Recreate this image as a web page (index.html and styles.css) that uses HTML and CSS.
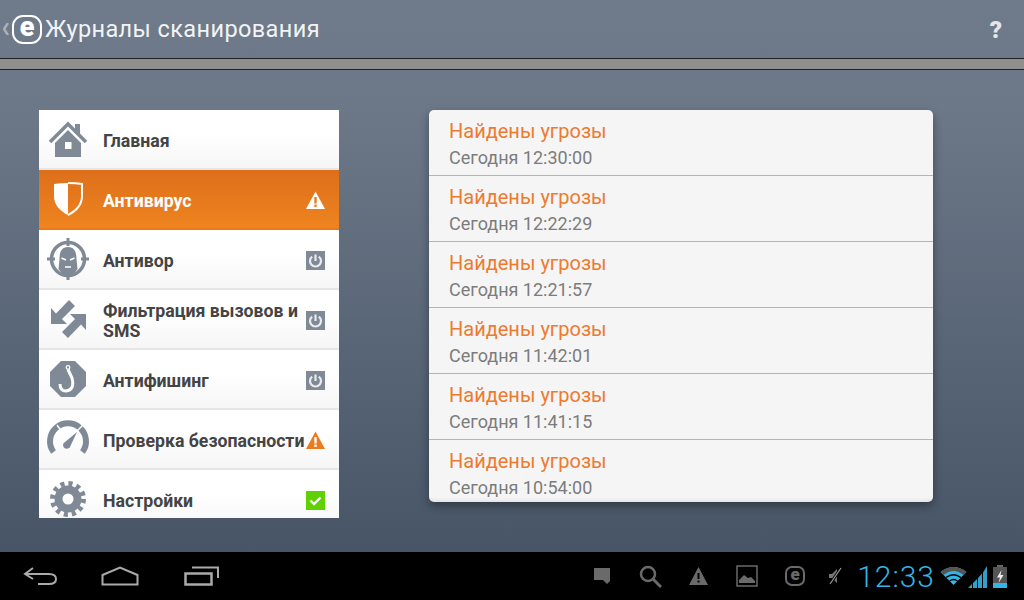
FILE: index.html
```html
<!DOCTYPE html>
<html lang="ru">
<head>
    <meta charset="UTF-8">
    <meta name="viewport" content="width=device-width, initial-scale=1.0">
    <title>Журналы сканирования</title>
    <link rel="stylesheet" href="styles.css">
</head>
<body>
    <header class="topbar">
        <svg class="back" width="6" height="12" viewBox="0 0 6 12"><path d="M5 0 L1 6 L5 12" fill="none" stroke="#a9b0ba" stroke-width="2.500"/></svg>
        <span class="logo">e</span>
        <h1>Журналы сканирования</h1>
        <span class="help">?</span>
    </header>
    <div class="band"></div>

    <main class="content">
        <nav class="menu">
            <div class="row">
                <svg class="icon" viewBox="0 0 44 44">
                    <rect x="29" y="6" width="5" height="10" fill="#808a97"/>
                    <path d="M4 24 L22 6 L40 24" fill="none" stroke="#808a97" stroke-width="3.500"/>
                    <path d="M9 25 L22 12 L35 25 V39 H9 Z" fill="#808a97"/>
                    <rect x="19" y="24" width="6.500" height="7" fill="#fff"/>
                </svg>
                <span class="label">Главная</span>
            </div>
            <div class="row active">
                <svg class="icon" viewBox="0 0 44 44">
                    <path d="M22 5 Q14 5 8 6 V18 C8 27 14 33 22 37 Z" fill="#fff"/>
                    <path d="M22 5 Q30 5 36 6 V18 C36 27 30 33 22 37" fill="none" stroke="#fff" stroke-width="2"/>
                </svg>
                <span class="label">Антивирус</span>
                <svg class="badge" viewBox="0 0 19 19">
                    <path d="M9.500 0.500 L19 18 H0 Z" fill="#fff"/>
                    <rect x="8.300" y="6" width="2.400" height="6.500" fill="#e87c1e"/>
                    <rect x="8.300" y="13.500" width="2.400" height="2.400" fill="#e87c1e"/>
                </svg>
            </div>
            <div class="row">
                <svg class="icon" viewBox="0 0 44 44">
                    <circle cx="22" cy="21" r="16.500" fill="none" stroke="#808a97" stroke-width="3.500"/>
                    <path d="M22 0 V8 M22 34 V42 M1 21 H9 M35 21 H43" stroke="#808a97" stroke-width="3"/>
                    <path d="M22 9 C15 9 13.500 15 13.500 21 L12.500 31 Q16 37 22 37 Q28 37 31.500 31 L30.500 21 C30.500 15 29 9 22 9 Z" fill="#808a97"/>
                    <path d="M15.500 20 L20 22 M28.500 20 L24 22 M19 29 H25" stroke="#fff" stroke-width="1.600"/>
                </svg>
                <span class="label">Антивор</span>
                <svg class="badge" viewBox="0 0 19 19">
                    <rect width="19" height="19" fill="#808a97"/>
                    <path d="M6.200 5.600 A5.500 5.500 0 1 0 12.800 5.600" fill="none" stroke="#e8eaed" stroke-width="2.200"/>
                    <path d="M9.500 3.500 V10" stroke="#e8eaed" stroke-width="2.200"/>
                </svg>
            </div>
            <div class="row">
                <svg class="icon" viewBox="0 0 44 44">
                    <polygon points="5,10 5,26 21,26 16,21 29,8 23,2 10,15.500" fill="#808a97"/>
                    <polygon points="40,32 40,16 24,16 29,21 16,34 22,40 35,26.500" fill="#808a97"/>
                </svg>
                <span class="label">Фильтрация вызовов и SMS</span>
                <svg class="badge" viewBox="0 0 19 19">
                    <rect width="19" height="19" fill="#808a97"/>
                    <path d="M6.200 5.600 A5.500 5.500 0 1 0 12.800 5.600" fill="none" stroke="#e8eaed" stroke-width="2.200"/>
                    <path d="M9.500 3.500 V10" stroke="#e8eaed" stroke-width="2.200"/>
                </svg>
            </div>
            <div class="row">
                <svg class="icon" viewBox="0 0 44 44">
                    <polygon points="15,3 29,3 40,14 40,28 29,39 15,39 4,28 4,14" fill="#808a97"/>
                    <circle cx="22" cy="9.500" r="1.800" fill="none" stroke="#fff" stroke-width="1.300"/>
                    <path d="M22 11.500 L26 20 Q29 32 20 33 Q14 33 14 26" fill="none" stroke="#fff" stroke-width="3"/>
                </svg>
                <span class="label">Антифишинг</span>
                <svg class="badge" viewBox="0 0 19 19">
                    <rect width="19" height="19" fill="#808a97"/>
                    <path d="M6.200 5.600 A5.500 5.500 0 1 0 12.800 5.600" fill="none" stroke="#e8eaed" stroke-width="2.200"/>
                    <path d="M9.500 3.500 V10" stroke="#e8eaed" stroke-width="2.200"/>
                </svg>
            </div>
            <div class="row">
                <svg class="icon" viewBox="0 0 44 44">
                    <path d="M7.500 34 A18 18 0 1 1 36.500 34" fill="none" stroke="#808a97" stroke-width="6"/>
                    <path d="M16 14 L11 7 M29 15 L37 7" stroke="#fff" stroke-width="1.500"/>
                    <path d="M31 14 L23.500 30 Q19 32 17.500 29 Q16 26 19 24 Z" fill="#808a97"/>
                </svg>
                <span class="label">Проверка безопасности</span>
                <svg class="badge" viewBox="0 0 19 19">
                    <path d="M9.500 0.500 L19 18 H0 Z" fill="#ee7a1e"/>
                    <rect x="8.300" y="6" width="2.400" height="6.500" fill="#fff"/>
                    <rect x="8.300" y="13.500" width="2.400" height="2.400" fill="#fff"/>
                </svg>
            </div>
            <div class="row">
                <svg class="icon" viewBox="0 0 44 44">
                    <circle cx="22" cy="21" r="15.500" fill="none" stroke="#808a97" stroke-width="5" stroke-dasharray="4.100 4.015"/>
                    <circle cx="22" cy="21" r="9.500" fill="none" stroke="#808a97" stroke-width="8"/>
                </svg>
                <span class="label">Настройки</span>
                <svg class="badge" viewBox="0 0 19 19">
                    <rect width="19" height="19" fill="#5fd000"/>
                    <path d="M4.500 9.500 L8 13 L14.500 6.500" fill="none" stroke="#fff" stroke-width="2.400"/>
                </svg>
            </div>
        </nav>

        <section class="logs">
            <div class="log"><p class="log-title">Найдены угрозы</p><p class="log-time">Сегодня 12:30:00</p></div>
            <div class="log"><p class="log-title">Найдены угрозы</p><p class="log-time">Сегодня 12:22:29</p></div>
            <div class="log"><p class="log-title">Найдены угрозы</p><p class="log-time">Сегодня 12:21:57</p></div>
            <div class="log"><p class="log-title">Найдены угрозы</p><p class="log-time">Сегодня 11:42:01</p></div>
            <div class="log"><p class="log-title">Найдены угрозы</p><p class="log-time">Сегодня 11:41:15</p></div>
            <div class="log"><p class="log-title">Найдены угрозы</p><p class="log-time">Сегодня 10:54:00</p></div>
        </section>
    </main>

    <footer class="sysbar">
        <svg class="nav-back" width="34" height="20" viewBox="0 0 34 20"><path d="M10 2 L2 8 L10 13 M2 8 H26 Q33 8 33 13 Q33 18 26 18 H15" fill="none" stroke="#aaa" stroke-width="2"/></svg>
        <svg class="nav-home" width="38" height="20" viewBox="0 0 38 20"><path d="M1.500 9 L19 1.500 L36.500 9 V18.500 H1.500 Z" fill="none" stroke="#aaa" stroke-width="2"/></svg>
        <svg class="nav-recent" width="36" height="20" viewBox="0 0 36 20"><path d="M8 1.500 H34 V12" fill="none" stroke="#aaa" stroke-width="2"/><rect x="1.500" y="7.500" width="26" height="11" fill="none" stroke="#aaa" stroke-width="2.500"/></svg>

        <div class="status">
            <svg class="st-chat" width="16" height="18" viewBox="0 0 16 18"><path d="M0 1 H16 V14 L13 17 L9 13 H0 Z" fill="#6a6a6a"/></svg>
            <svg class="st-search" width="23" height="23" viewBox="0 0 23 23"><circle cx="9" cy="9" r="7" fill="none" stroke="#6a6a6a" stroke-width="2.500"/><path d="M14 14 L22 22" stroke="#6a6a6a" stroke-width="3"/></svg>
            <svg class="st-warn" width="19" height="18" viewBox="0 0 19 18"><path d="M9.500 0 L19 18 H0 Z" fill="#6a6a6a"/><path d="M8.500 6 H10.500 V12 H8.500 Z M8.500 13.500 H10.500 V15.500 H8.500 Z" fill="#000"/></svg>
            <svg class="st-pic" width="22" height="22" viewBox="0 0 22 22"><rect x="1" y="1" width="20" height="20" fill="none" stroke="#6a6a6a" stroke-width="1.500"/><path d="M3 18 V15 L8 10 L12 13 L15 12 L19 16 V18 Z" fill="#6a6a6a"/></svg>
            <span class="st-logo">e</span>
            <svg class="st-mute" width="14" height="18" viewBox="0 0 14 18"><path d="M1 7 H4 L9 2 V16 L4 11 H1 Z" fill="#777"/><path d="M2 17 L13 1" stroke="#000" stroke-width="3"/><path d="M2 17 L13 1" stroke="#999" stroke-width="1.200"/></svg>
            <span class="clock">12:33</span>
            <svg class="st-wifi" width="27" height="20" viewBox="0 0 27 20"><path d="M13.500 19 L0.500 6 Q13.500 -4 26.500 6 Z" fill="#33b5e5"/><path d="M0.500 6 Q13.500 -4 26.500 6 L23.500 9 Q13.500 1 3.500 9 Z" fill="#555"/><path d="M6 11.500 Q13.500 6 21 11.500 M9.500 15 Q13.500 12 17.500 15" fill="none" stroke="#000" stroke-width="1.300"/></svg>
            <svg class="st-signal" width="19" height="23" viewBox="0 0 19 23"><path d="M0 23 L4 19 V23 Z M5 23 V18 L9 14 V23 Z M10 23 V13 L14 8.500 V23 Z M15 23 V7.500 L19 1 V23 Z" fill="#33a0cc"/></svg>
            <svg class="st-batt" width="14" height="23" viewBox="0 0 14 23"><rect x="4" y="0" width="6" height="2" fill="#666"/><rect x="0" y="2" width="14" height="21" fill="#555"/><rect x="0" y="18" width="14" height="5" fill="#33b5e5"/><path d="M8.500 5 L4 12.500 H7 L5.500 18 L10.500 10 H7.500 Z" fill="#eee"/></svg>
        </div>
    </footer>
</body>
</html>
```

FILE: styles.css
```css
html, body {
    margin: 0;
    padding: 0;
    height: 600px;
    overflow: hidden;
}
body {
    display: flex;
    flex-direction: column;
    font-family: Roboto, "Noto Sans", sans-serif;
    background: linear-gradient(#6f7b8b 0, #6c7888 110px, #475566 552px);
}
p, h1 {
    margin: 0;
    font-weight: normal;
}

/* top bar */
.topbar {
    height: 58px;
    display: flex;
    align-items: center;
    padding-left: 3px;
    color: #f2f3f5;
}
.back {
    margin-right: 3px;
}
.logo {
    width: 30px;
    height: 29px;
    box-sizing: border-box;
    border: 2.5px solid #fff;
    border-radius: 11px;
    color: #fff;
    font-size: 27px;
    font-weight: 900;
    line-height: 20px;
    text-align: center;
    margin-right: 3px;
}
.topbar h1 {
    font-size: 23.5px;
    letter-spacing: 0.4px;
}
.help {
    margin-left: auto;
    margin-right: 22px;
    padding-top: 2px;
    font-size: 24px;
    font-weight: 900;
    color: #e4e6ea;
}
.band {
    height: 10px;
    background: #8f8f8f;
    border-top: 1px solid #222;
    border-bottom: 1px solid #222;
}

/* content */
.content {
    flex: 1;
    display: flex;
    align-items: flex-start;
    padding: 40px 0 0 39px;
}
.menu {
    width: 300px;
    height: 408px;
    overflow: hidden;
    flex: none;
}
.row {
    height: 60px;
    box-sizing: border-box;
    display: flex;
    align-items: center;
    gap: 13px;
    padding: 2px 14px 0 7px;
    background: linear-gradient(#fff 40%, #f6f6f6);
    border-bottom: 2px solid #e6e6e6;
}
.row.active {
    background: linear-gradient(#dd6f1a, #ef8420);
    border-bottom: 2px solid #e87a1c;
}
.row.active .label {
    color: #fff;
}
.icon {
    width: 44px;
    height: 44px;
    flex: none;
}
.label {
    flex: 1;
    min-width: 0;
    margin-top: 2px;
    color: #444;
    font-size: 17.7px;
    font-weight: 700;
    line-height: 20px;
}
.badge {
    width: 19px;
    height: 19px;
    flex: none;
    margin-left: -13px;
}

.logs {
    width: 504px;
    height: 392px;
    margin-left: 90px;
    overflow: hidden;
    background: #f5f5f5;
    border-radius: 5px;
    box-shadow: 0 4px 10px rgba(0, 0, 0, 0.35), inset 0 -4px 4px -3px rgba(0, 0, 0, 0.1);
    flex: none;
}
.log {
    height: 66px;
    box-sizing: border-box;
    padding: 8px 0 0 20px;
    border-bottom: 1px solid #b4b4b4;
}
.log-title {
    color: #ee7a2f;
    font-size: 20px;
    line-height: 26px;
    margin-bottom: 1px;
}
.log-time {
    color: #7c7c7c;
    font-size: 18px;
    line-height: 26px;
}

/* system bar */
.sysbar {
    height: 48px;
    flex: none;
    background: #000;
    display: flex;
    align-items: center;
    padding-left: 23px;
}
.nav-home {
    margin-left: 44px;
}
.nav-recent {
    margin-left: 45px;
}
.status {
    margin-left: auto;
    display: flex;
    align-items: center;
    padding-right: 17px;
}
.st-search { margin-left: 29px; }
.st-warn { margin-left: 27px; }
.st-pic { margin-left: 28px; }
.st-logo {
    margin-left: 27px;
    width: 20px;
    height: 20px;
    box-sizing: border-box;
    border: 2px solid #6a6a6a;
    border-radius: 7px;
    color: #6a6a6a;
    font-size: 17px;
    font-weight: 900;
    line-height: 13px;
    text-align: center;
}
.st-mute { margin-left: 23px; }
.clock {
    margin-left: 15px;
    color: #33b5e5;
    font-size: 30px;
    font-weight: 300;
    letter-spacing: 1px;
}
.st-wifi { margin-left: 5px; }
.st-signal { margin-left: 1px; }
.st-batt { margin-left: 6px; }
```
